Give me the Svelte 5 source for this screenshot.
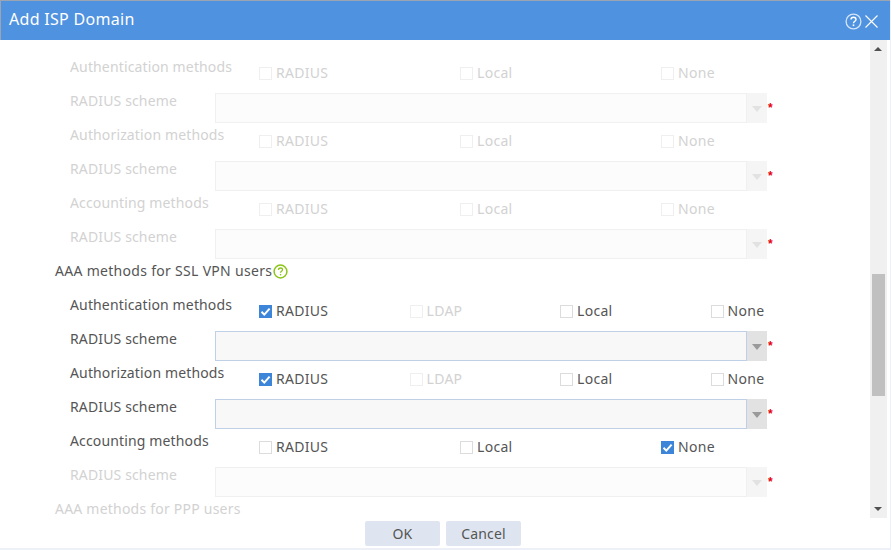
<script>
  const disabledGroup = [
    { type: 'checks', label: 'Authentication methods', off: true },
    { type: 'scheme', off: true },
    { type: 'checks', label: 'Authorization methods', off: true },
    { type: 'scheme', off: true },
    { type: 'checks', label: 'Accounting methods', off: true },
    { type: 'scheme', off: true }
  ];

  const fourOpts = [
    { name: 'RADIUS', checked: true },
    { name: 'LDAP', off: true },
    { name: 'Local' },
    { name: 'None' }
  ];

  const sslRows = [
    { type: 'checks', label: 'Authentication methods', four: true, opts: fourOpts },
    { type: 'scheme' },
    { type: 'checks', label: 'Authorization methods', four: true, opts: fourOpts },
    { type: 'scheme' },
    {
      type: 'checks',
      label: 'Accounting methods',
      opts: [{ name: 'RADIUS' }, { name: 'Local' }, { name: 'None', checked: true }]
    },
    { type: 'scheme', off: true }
  ];

  const plainOpts = [
    { name: 'RADIUS', off: true },
    { name: 'Local', off: true },
    { name: 'None', off: true }
  ];
</script>

{#snippet row(r)}
  <div class="row" class:off={r.off}>
    {#if r.type === 'scheme'}
      <span class="label">RADIUS scheme</span>
      <div class="select">
        <div class="input"></div>
        <div class="arrow"><i></i></div>
      </div>
      <span class="star">*</span>
    {:else}
      <span class="label">{r.label}</span>
      <div class="checks" class:four={r.four}>
        {#each r.opts ?? plainOpts as o}
          <span class="opt" class:off={o.off}>
            <span class="box" class:checked={o.checked}>
              {#if o.checked}
                <svg viewBox="0 0 13 13" width="13" height="13">
                  <path d="M2.5 6.8 5.3 9.6 10.6 3.6" fill="none" stroke="#fff" stroke-width="2" />
                </svg>
              {/if}
            </span>
            {o.name}
          </span>
        {/each}
      </div>
    {/if}
  </div>
{/snippet}

<div class="dialog">
  <header class="title">
    <h1>Add ISP Domain</h1>
    <div class="tools">
      <svg width="17" height="17" viewBox="0 0 17 17">
        <circle cx="8.5" cy="8.5" r="7.4" fill="none" stroke="#d5e5f8" stroke-width="1.3" />
        <path d="M6 6.6c0-1.6 1.1-2.4 2.5-2.4s2.5.9 2.5 2.2c0 1.9-2.5 1.9-2.5 3.9" fill="none" stroke="#fff" stroke-width="1.4" />
        <rect x="7.7" y="11.4" width="1.6" height="1.7" fill="#fff" />
      </svg>
      <svg width="15" height="15" viewBox="0 0 15 15">
        <path d="M1.5 1.5 13.5 13.5M13.5 1.5 1.5 13.5" stroke="#fff" stroke-width="1.1" fill="none" />
      </svg>
    </div>
  </header>

  <div class="body">
    <div class="content">
      {#each disabledGroup as r}
        {@render row(r)}
      {/each}

      <div class="heading">
        AAA methods for SSL VPN users
        <svg width="15" height="15" viewBox="0 0 15 15">
          <circle cx="7.5" cy="7.5" r="6.4" fill="none" stroke="#8cc41a" stroke-width="1.5" />
          <path d="M5.5 5.9c0-1.2.9-1.9 2-1.9s2 .7 2 1.7c0 1.4-2 1.5-2 3" fill="none" stroke="#8cc41a" stroke-width="1.3" />
          <rect x="6.9" y="10" width="1.3" height="1.4" fill="#8cc41a" />
        </svg>
      </div>

      {#each sslRows as r}
        {@render row(r)}
      {/each}

      <div class="heading off">AAA methods for PPP users</div>
    </div>

    <div class="scrollbar">
      <span class="tri up"></span>
      <div class="thumb"></div>
      <span class="tri down"></span>
    </div>
  </div>

  <footer class="footer">
    <button>OK</button>
    <button>Cancel</button>
  </footer>
</div>

<style>
  :global(body) {
    margin: 0;
    background: #fff;
  }

  .dialog {
    width: 891px;
    height: 550px;
    box-sizing: border-box;
    display: flex;
    flex-direction: column;
    overflow: hidden;
    font-family: "Noto Sans", sans-serif;
    font-size: 14px;
    letter-spacing: 0.14px;
    color: #555;
    border-bottom: 2px solid #edf1f7;
    border-right: 1px solid #edf1f7;
  }

  .title {
    height: 40px;
    flex: none;
    box-sizing: border-box;
    margin-right: -1px;
    padding: 0 11px 3px 8px;
    display: flex;
    align-items: center;
    justify-content: space-between;
    background: #4f92e0;
    border-top: 1px solid #9aa5b1;
    border-left: 1px solid #9aa5b1;
    border-right: 1px solid #9aa5b1;
    color: #fff;
  }

  h1 {
    margin: 0;
    font-size: 16px;
    font-weight: 400;
    letter-spacing: 0.3px;
  }

  .tools {
    display: flex;
    align-items: center;
    gap: 2px;
    padding-top: 5px;
  }

  .body {
    flex: 1;
    min-height: 0;
    display: flex;
    overflow: hidden;
    padding-right: 3px;
  }

  .content {
    flex: 1;
    min-width: 0;
    padding: 20px 0 0 70px;
    overflow: hidden;
  }

  .row {
    height: 34px;
    display: flex;
    align-items: flex-start;
    color: #555;
  }

  .row.off {
    color: #d2d2d2;
  }

  .label {
    width: 145px;
    flex: none;
    line-height: 14px;
    white-space: nowrap;
  }

  .checks {
    display: flex;
    padding: 6px 0 0 44px;
    line-height: 14px;
    letter-spacing: 0.3px;
  }

  .opt {
    width: 201px;
    display: flex;
    align-items: center;
    gap: 4px;
  }

  .four .opt {
    width: 150.5px;
  }

  .opt.off {
    color: #d2d2d2;
  }

  .box {
    width: 11px;
    height: 11px;
    border: 1px solid #dcdcdc;
    background: #fff;
    display: block;
    flex: none;
  }

  .off .box {
    border-color: #efefef;
  }

  .box.checked {
    background: #3d85d8;
    border-color: #3d85d8;
  }

  .box svg {
    display: block;
    margin: -1px;
  }

  .select {
    display: flex;
    width: 552px;
    height: 30px;
    flex: none;
    margin-top: -1px;
  }

  .input {
    flex: 1;
    box-sizing: border-box;
    border: 1px solid #bfd0e6;
    background: #f8f8f8;
  }

  .off .input {
    border-color: #f0f0f0;
    background: #fcfcfc;
  }

  .arrow {
    width: 20px;
    background: #e2e2e2;
    display: flex;
    align-items: center;
    justify-content: center;
  }

  .off .arrow {
    background: #f5f5f5;
  }

  .arrow i {
    display: block;
    width: 0;
    height: 0;
    margin-top: 2px;
    border-left: 5px solid transparent;
    border-right: 5px solid transparent;
    border-top: 6px solid #9a9a9a;
  }

  .off .arrow i {
    border-top-color: #e2e2e2;
  }

  .star {
    margin: 6px 0 0 1px;
    color: #e60012;
    font-size: 12px;
    line-height: 16px;
    width: 6px;
    font-family: "Liberation Sans", sans-serif;
    font-weight: 700;
  }

  .heading {
    height: 34px;
    margin-left: -15px;
    line-height: 14px;
    display: flex;
    align-items: flex-start;
    gap: 1px;
    letter-spacing: 0.3px;
    color: #555;
  }

  .heading.off {
    color: #d2d2d2;
    letter-spacing: 0.22px;
  }

  .scrollbar {
    width: 17px;
    flex: none;
    background: #f0f0f0;
    position: relative;
  }

  .thumb {
    position: absolute;
    left: 2px;
    right: 2px;
    top: 234px;
    height: 122px;
    background: #c0c0c0;
  }

  .tri {
    position: absolute;
    left: 4px;
    width: 0;
    height: 0;
    border-left: 4px solid transparent;
    border-right: 4px solid transparent;
  }

  .tri.up {
    top: 7px;
    border-bottom: 4px solid #505050;
  }

  .tri.down {
    bottom: 7px;
    border-top: 4px solid #505050;
  }

  .footer {
    height: 30px;
    flex: none;
    display: flex;
    justify-content: center;
    gap: 6px;
    padding: 3px 4px 0 0;
    box-sizing: border-box;
  }

  button {
    width: 75px;
    height: 25px;
    border: 0;
    border-radius: 2px;
    background: #dfe5f0;
    color: #555;
    font: inherit;
    letter-spacing: 0.14px;
    padding: 0;
  }
</style>
